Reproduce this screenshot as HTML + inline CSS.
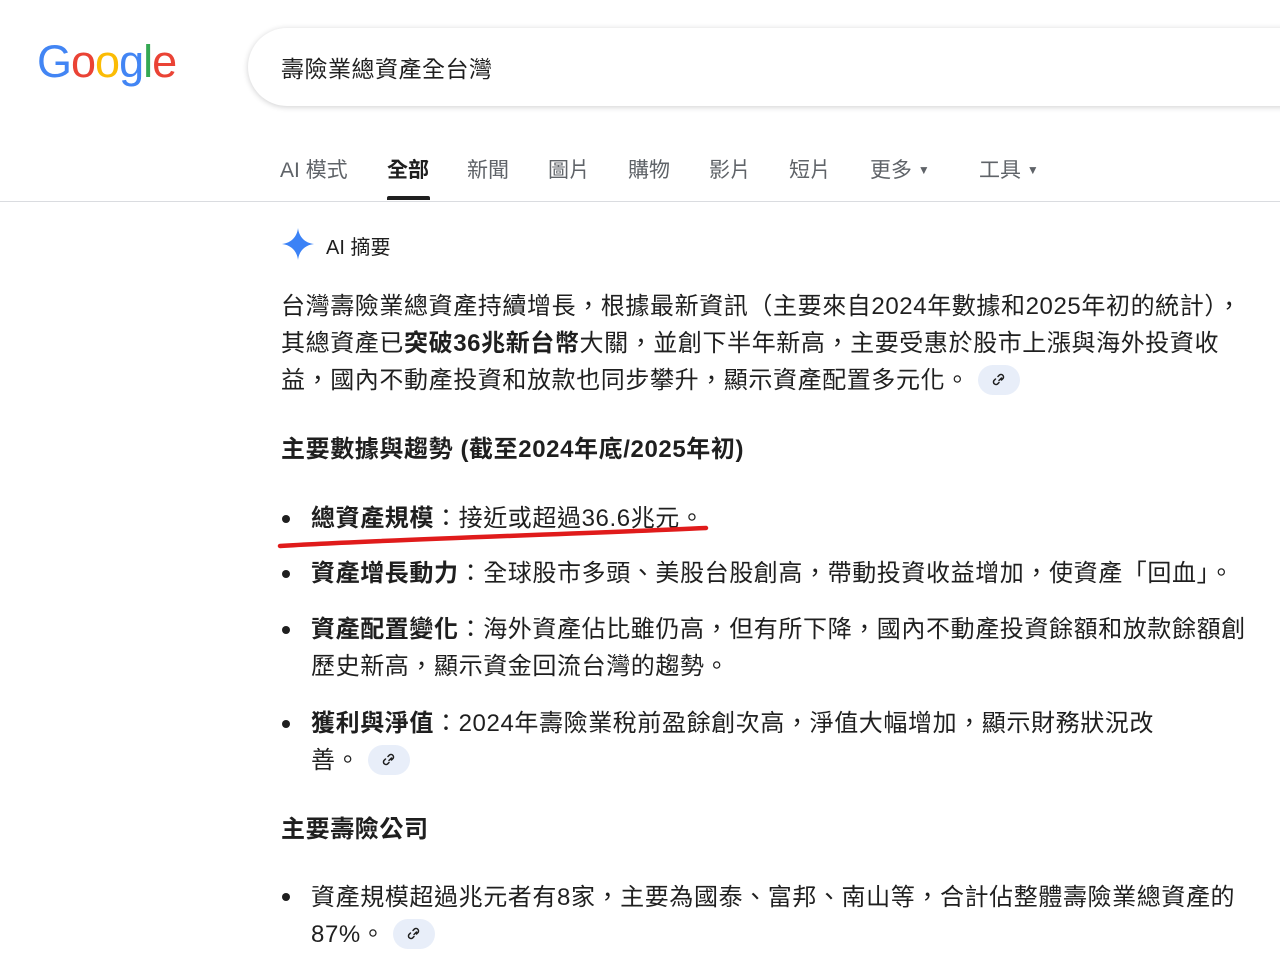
<!DOCTYPE html><html><head><meta charset="utf-8"><style>
body{margin:0;width:1280px;height:979px;background:#fff;font-family:"Liberation Sans","Noto Sans CJK TC",sans-serif;color:#1f1f1f;position:relative;overflow:hidden}
.a{position:absolute;white-space:nowrap}
.tab{position:absolute;top:154px;font-size:21px;color:#5f6368}
.p{font-size:24px;line-height:37px;letter-spacing:0.6px}
b{font-weight:bold;color:#1f1f1f}
.lk{display:inline-block;width:42px;height:30px;border-radius:15px;background:#e8eef9;vertical-align:middle;margin-left:8px;position:relative;top:-2px}
.lk svg{position:absolute;left:13px;top:7px}
.dot{position:absolute;left:282px;width:8px;height:8px;border-radius:50%;background:#1f1f1f}
</style></head><body>
<div class="a" style="left:37px;top:36px;font-size:45px;letter-spacing:-1px;font-family:'Liberation Sans',sans-serif"><span style="color:#4285f4">G</span><span style="color:#ea4335">o</span><span style="color:#fbbc05">o</span><span style="color:#4285f4">g</span><span style="color:#34a853">l</span><span style="color:#ea4335">e</span></div>
<div style="position:absolute;left:248px;top:28px;width:1100px;height:78px;border-radius:39px;box-shadow:0 1px 6px rgba(32,33,36,.22);background:#fff"></div>
<div class="a" style="left:281px;top:50px;font-size:23px;letter-spacing:0.5px;color:#1f1f1f">壽險業總資產全台灣</div>
<div class="tab" style="left:280px">AI 模式</div>
<div class="tab" style="left:387px;color:#1f1f1f;font-weight:bold">全部</div>
<div class="tab" style="left:467px">新聞</div>
<div class="tab" style="left:548px">圖片</div>
<div class="tab" style="left:628px">購物</div>
<div class="tab" style="left:709px">影片</div>
<div class="tab" style="left:789px">短片</div>
<div class="tab" style="left:870px">更多 <span style="font-size:12px;position:relative;top:-3px">▼</span></div>
<div class="tab" style="left:979px">工具 <span style="font-size:12px;position:relative;top:-3px">▼</span></div>
<div style="position:absolute;left:387px;top:196px;width:43px;height:4px;background:#1f1f1f;border-radius:2px 2px 0 0"></div>
<div style="position:absolute;left:0;top:201px;width:1280px;height:1px;background:#dadce0"></div>
<svg style="position:absolute;left:281px;top:227px" width="34" height="34" viewBox="0 0 34 34"><path d="M17 1C18 10 24 16 33 17C24 18 18 24 17 33C16 24 10 18 1 17C10 16 16 10 17 1Z" fill="#3b82f6"/></svg>
<div class="a" style="left:326px;top:231px;font-size:20px;color:#1f1f1f">AI 摘要</div>
<div class="a p" style="left:281px;top:288px">台灣壽險業總資產持續增長，根據最新資訊（主要來自2024年數據和2025年初的統計），<br>其總資產已<b>突破36兆新台幣</b>大關，並創下半年新高，主要受惠於股市上漲與海外投資收<br>益，國內不動產投資和放款也同步攀升，顯示資產配置多元化。<span class="lk"><svg width="16" height="16" viewBox="0 0 16 16"><path d="M7 9.5l2.5-2.5M6 5.5l1.5-1.5a2.5 2.5 0 013.5 3.5L9.5 9M7 11.5L5.5 13a2.5 2.5 0 01-3.5-3.5L3.5 8" stroke="#1f1f1f" stroke-width="1.5" fill="none" stroke-linecap="round" transform="translate(1 -1)"/></svg></span></div>
<div class="a p" style="left:281px;top:431px"><b>主要數據與趨勢 (截至2024年底/2025年初)</b></div>
<div class="dot" style="top:515px"></div>
<div class="a p" style="left:311px;top:500px"><b>總資產規模</b>：接近或超過36.6兆元。</div>
<svg style="position:absolute;left:276px;top:504px" width="440" height="50"><path d="M4 42C100 36 300 30 430 24" stroke="#e01b1b" stroke-width="4.5" fill="none" stroke-linecap="round"/></svg>
<div class="dot" style="top:570px"></div>
<div class="a p" style="left:311px;top:555px"><b>資產增長動力</b>：全球股市多頭、美股台股創高，帶動投資收益增加，使資產「回血」。</div>
<div class="dot" style="top:626px"></div>
<div class="a p" style="left:311px;top:611px"><b>資產配置變化</b>：海外資產佔比雖仍高，但有所下降，國內不動產投資餘額和放款餘額創<br>歷史新高，顯示資金回流台灣的趨勢。</div>
<div class="dot" style="top:720px"></div>
<div class="a p" style="left:311px;top:705px"><b>獲利與淨值</b>：2024年壽險業稅前盈餘創次高，淨值大幅增加，顯示財務狀況改<br>善。<span class="lk"><svg width="16" height="16" viewBox="0 0 16 16"><path d="M7 9.5l2.5-2.5M6 5.5l1.5-1.5a2.5 2.5 0 013.5 3.5L9.5 9M7 11.5L5.5 13a2.5 2.5 0 01-3.5-3.5L3.5 8" stroke="#1f1f1f" stroke-width="1.5" fill="none" stroke-linecap="round" transform="translate(1 -1)"/></svg></span></div>
<div class="a p" style="left:281px;top:811px"><b>主要壽險公司</b></div>
<div class="dot" style="top:893px"></div>
<div class="a p" style="left:311px;top:879px">資產規模超過兆元者有8家，主要為國泰、富邦、南山等，合計佔整體壽險業總資產的<br>87%。<span class="lk"><svg width="16" height="16" viewBox="0 0 16 16"><path d="M7 9.5l2.5-2.5M6 5.5l1.5-1.5a2.5 2.5 0 013.5 3.5L9.5 9M7 11.5L5.5 13a2.5 2.5 0 01-3.5-3.5L3.5 8" stroke="#1f1f1f" stroke-width="1.5" fill="none" stroke-linecap="round" transform="translate(1 -1)"/></svg></span></div>
</body></html>
